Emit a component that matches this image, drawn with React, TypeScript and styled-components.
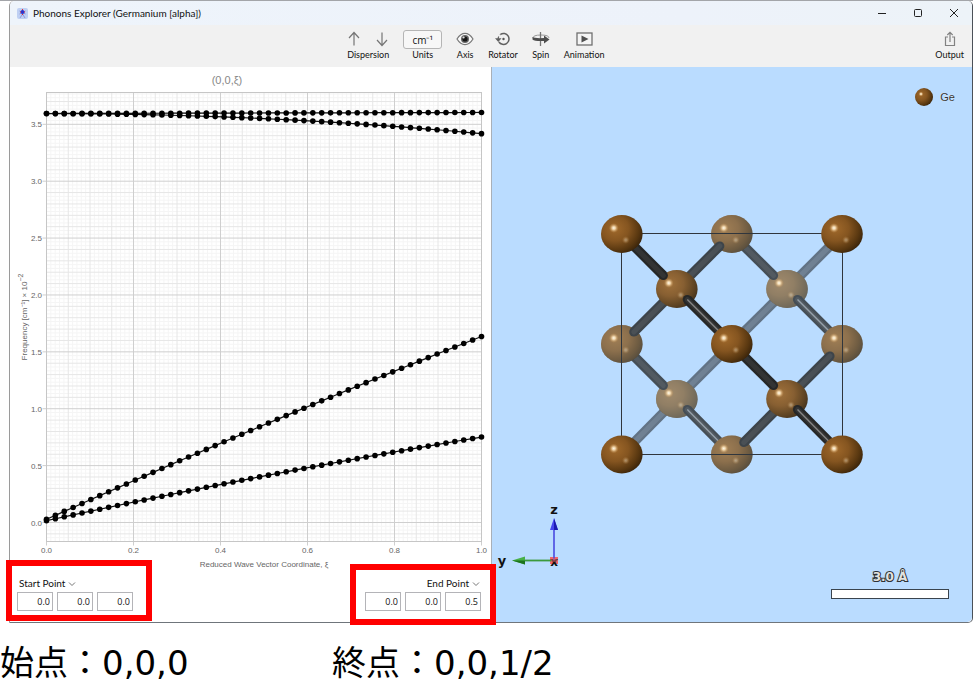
import React from "react";
import styled, { createGlobalStyle } from "styled-components";

const UI_FONT = `Lato, "Open Sans", sans-serif`;
const SKY = "#badcff";

const GlobalStyle = createGlobalStyle`
  * { box-sizing: border-box; }
  body { margin: 0; background: #fff; color: #111; font-family: ${UI_FONT}; }
  button, input { font: inherit; color: inherit; }
`;

const Page = styled.main`
  padding: 0 0 0 9px;
  border-top: 1px solid #a3a5a9;
`;

const Window = styled.section`
  border: solid #9a9a9a;
  border-width: 0 1px 1px 1px;
  border-right-color: #4b5158;
  border-bottom-color: #6f757b;
  border-radius: 5px 5px 5px 0;
`;

const TitleBar = styled.header`
  display: flex;
  align-items: center;
  height: 24px;
  padding-left: 7px;
  gap: 5px;
  background: linear-gradient(90deg, #eef4fb, #edf2fa 70%, #edf3f8);
  border-radius: 5px 5px 0 0;
`;

const Title = styled.h1`
  flex: 1;
  margin: 0;
  font-size: 10px;
  font-weight: 400;
  line-height: 22px;
`;

const Caption = styled.div`
  display: flex;
`;

const CaptionButton = styled.button`
  display: grid;
  place-items: center;
  width: 36px;
  height: 24px;
  padding: 0;
  border: 0;
  background: none;
`;

const Toolbar = styled.nav`
  display: flex;
  height: 42px;
  background: #f1f1f1;
`;

const Spacer = styled.div<{ $grow: number }>`
  flex: ${(p) => p.$grow} 1 0;
  display: flex;
  justify-content: flex-end;
  padding-right: 8px;
`;

const Tools = styled.div`
  display: flex;
  gap: 14px;
`;

const Tool = styled.div`
  display: flex;
  flex-direction: column;
  align-items: center;
  padding-top: 4px;
  font-size: 9px;
  line-height: 12px;
`;

const ToolButton = styled.button`
  display: flex;
  flex-direction: column;
  align-items: center;
  padding: 4px 0 0;
  border: 0;
  background: none;
  font-size: 9px;
  line-height: 12px;
`;

const IconSlot = styled.span`
  display: flex;
  align-items: center;
  justify-content: center;
  height: 20px;
`;

const ArrowPair = styled.div`
  display: flex;
  gap: 14px;
  height: 20px;
`;

const BareButton = styled.button`
  display: grid;
  place-items: center;
  width: 14px;
  padding: 0;
  border: 0;
  background: none;
`;

const UnitsFace = styled.span`
  display: block;
  width: 39px;
  height: 19px;
  border: 1px solid #b5b5b5;
  border-radius: 3px;
  background: #f7f7f7;
  font: 10px/18px "Open Sans", sans-serif;
`;

const Content = styled.div`
  display: grid;
  grid-template-columns: 482fr 480fr;
`;

const ChartPanel = styled.section`
  display: flex;
  flex-direction: column;
  min-width: 0;
  border-right: 1px solid #a9b0b8;
  background: #fff;
`;

const Drawing = styled.svg`
  display: block;
  width: 100%;
  height: auto;
`;

const Points = styled.div`
  display: flex;
  justify-content: space-between;
  align-items: flex-start;
  margin: -12px -5px -3px -4px;
  position: relative;
`;

const PointBox = styled.fieldset<{ $end?: boolean }>`
  display: flex;
  flex-direction: column;
  align-items: ${(p) => (p.$end ? "flex-end" : "flex-start")};
  width: 146px;
  height: 61px;
  margin: ${(p) => (p.$end ? "4px 0 0" : "0")};
  padding: ${(p) => (p.$end ? "7px 9px 0 5px" : "11px 5px 0")};
  border: 6px solid #f00;
`;

const PointMenu = styled.button`
  display: flex;
  align-items: center;
  gap: 3px;
  padding: 0 1px 0 2px;
  border: 0;
  background: none;
  font-size: 10px;
  line-height: 13px;
`;

const Coordinates = styled.div`
  display: flex;
  gap: 4px;
  margin-top: 2px;
`;

const Coordinate = styled.input`
  width: 36px;
  height: 19px;
  padding: 0 2px;
  border: 1px solid #b4b4b8;
  background: #fff;
  font: 9px "Open Sans", sans-serif;
  text-align: right;
`;

const Viewer = styled.section`
  display: flex;
  flex-direction: column;
  min-width: 0;
  background: ${SKY};
  border-radius: 0 0 5px 0;
`;

const Legend = styled.div`
  display: flex;
  align-items: center;
  justify-content: flex-end;
  gap: 6px;
  height: 60px;
  padding-right: 17px;
  font: 11px "Liberation Sans", Arial, sans-serif;
  color: #333;
  text-shadow: 0 0 1px #fff;
`;

const CrystalArea = styled.div`
  padding-top: 73px;
`;

const ViewerFooter = styled.footer`
  display: flex;
  flex: 1;
  justify-content: space-between;
  align-items: flex-end;
  padding: 0 23px 23px 4px;
`;

const TriadSlot = styled.div`
  display: flex;
  padding-bottom: 29px;
`;

const Scale = styled.div`
  display: flex;
  flex-direction: column;
  align-items: center;
  width: 118px;
`;

const ScaleLabel = styled.span`
  font: bold 12px/14px "DejaVu Sans", sans-serif;
  color: #e2e2de;
  -webkit-text-stroke: 2px #2c3136;
  paint-order: stroke fill;
  margin-bottom: 5px;
`;

const ScaleBar = styled.div`
  width: 100%;
  height: 10px;
  border: 1px solid #3a444e;
  background: #fff;
`;

const Notes = styled.div`
  display: flex;
  margin: 16px 0 0 -9px;
  font: 34px/49px "DejaVu Sans", "Noto Sans CJK JP", sans-serif;
  color: #000;
`;

const Note = styled.p<{ $wide?: boolean }>`
  margin: 0;
  flex: ${(p) => (p.$wide ? "641 1 0" : "332 1 0")};
  white-space: nowrap;
`;

/* ---------- chart ---------- */

const X0 = 46.5;
const X1 = 481.5;
const TOP = 92.5;
const BOTTOM = 541.5;
const ZERO = 522.5;
const UNIT = 113.77;
const px = (t: number) => X0 + (X1 - X0) * t;
const py = (v: number) => ZERO - UNIT * v;

const branches: ((t: number) => number)[] = [
  (t) => 3.595 + 0.009 * t,
  (t) => 3.594 - 0.176 * t * t,
  (t) => 0.028 + 1.712 * t - 0.105 * t * t,
  (t) => 0.016 + 0.835 * t - 0.1 * t * t,
];
const samples = Array.from({ length: 50 }, (_, i) => i / 49);

function DispersionChart() {
  const xs = Array.from({ length: 101 }, (_, i) => i).filter((i) => i % 20);
  const ys = Array.from({ length: 120 }, (_, i) => i - 4).filter(
    (i) => py(i / 30) > TOP && i % 15
  );
  return (
    <Drawing viewBox="10 67 481 505" role="img" aria-label="Phonon dispersion">
      <g stroke="#f5f5f5">
        {xs.filter((i) => i % 5).map((i) => (
          <line key={i} x1={px(i / 100)} x2={px(i / 100)} y1={TOP} y2={BOTTOM} />
        ))}
        {ys.filter((i) => i % 3).map((i) => (
          <line key={i} x1={X0} x2={X1} y1={py(i / 30)} y2={py(i / 30)} />
        ))}
      </g>
      <g stroke="#e6e6e6">
        {xs.filter((i) => i % 5 === 0).map((i) => (
          <line key={i} x1={px(i / 100)} x2={px(i / 100)} y1={TOP} y2={BOTTOM} />
        ))}
        {ys.filter((i) => i % 3 === 0).map((i) => (
          <line key={i} x1={X0} x2={X1} y1={py(i / 30)} y2={py(i / 30)} />
        ))}
      </g>
      <g stroke="#cfcfcf">
        {[0, 0.2, 0.4, 0.6, 0.8, 1].map((t) => (
          <line key={t} x1={px(t)} x2={px(t)} y1={TOP} y2={BOTTOM + 4} />
        ))}
        {[0, 0.5, 1, 1.5, 2, 2.5, 3, 3.5].map((v) => (
          <line key={v} x1={X0 - 4} x2={X1} y1={py(v)} y2={py(v)} />
        ))}
      </g>
      <rect x={X0} y={TOP} width={X1 - X0} height={BOTTOM - TOP} fill="none" stroke="#c6c6c6" />
      {branches.map((f, b) => (
        <g key={b}>
          <polyline
            points={samples.map((t) => `${px(t)},${py(f(t))}`).join(" ")}
            fill="none"
            stroke="#111"
            strokeWidth="1.2"
          />
          {samples.map((t) => (
            <circle key={t} cx={px(t)} cy={py(f(t))} r="2.8" />
          ))}
        </g>
      ))}
      <g fontFamily="Liberation Sans, Arial, sans-serif" fontSize="8" fill="#666">
        {[0, 0.5, 1, 1.5, 2, 2.5, 3, 3.5].map((v) => (
          <text key={v} x="42" y={py(v) + 3} textAnchor="end">{v.toFixed(1)}</text>
        ))}
        {[0, 0.2, 0.4, 0.6, 0.8, 1].map((t) => (
          <text key={t} x={px(t)} y="553" textAnchor="middle">{t.toFixed(1)}</text>
        ))}
        <text x="264" y="567" textAnchor="middle">Reduced Wave Vector Coordinate, ξ</text>
        <text transform="translate(27 317) rotate(-90)" textAnchor="middle">
          Frequency [cm⁻¹] × 10<tspan dy="-4" fontSize="7">−2</tspan>
        </text>
        <text x="227" y="84" textAnchor="middle" fontSize="11" fill="#888">(0,0,ξ)</text>
      </g>
    </Drawing>
  );
}

/* ---------- crystal ---------- */

const GX = [621.8, 676.8, 731.8, 787, 842];
const GY = [234, 289, 344, 399, 454.5];
type Site = [number, number];
type Level = { fog: number; atoms: Site[] };

const levels: Level[] = [
  { fog: 0, atoms: [[0, 0], [4, 0], [2, 2], [0, 4], [4, 4]] },
  { fog: 0.12, atoms: [[1, 1], [3, 3]] },
  { fog: 0.3, atoms: [[2, 0], [0, 2], [4, 2], [2, 4]] },
  { fog: 0.46, atoms: [[3, 1], [1, 3]] },
  { fog: 0.5, atoms: [[0, 0], [4, 0], [2, 2], [0, 4], [4, 4]] },
];
const bondColors = [
  { edge: "#262727", core: "#333434", shine: "#858585" },
  { edge: "#3d444a", core: "#4a5055", shine: "#50565b" },
  { edge: "#454e56", core: "#525a61", shine: "#96a1ab" },
  { edge: "#627385", core: "#708193", shine: "#76879a" },
];

function Atom({ site: [i, j], fog }: { site: Site; fog: number }) {
  const x = GX[i];
  const y = GY[j];
  return (
    <g>
      <ellipse cx={x} cy={y} rx="20.8" ry="18.9" fill="url(#ge)" />
      <ellipse cx={x} cy={y} rx="20.8" ry="18.9" fill="#a0b0b6" opacity={fog} />
      <circle cx={x - 8} cy={y - 6} r="5" fill="url(#glint)" />
      <circle cx={x + 4} cy={y + 6} r="4" fill="url(#glint)" opacity="0.4" />
    </g>
  );
}

/* Bonds joining a nearer level to the one behind it, stopping at the farther atom's face. */
function Bonds({ near }: { near: number }) {
  const c = bondColors[near];
  const parts: React.ReactNode[] = [];
  levels[near].atoms.forEach(([i, j]) =>
    levels[near + 1].atoms.forEach(([k, l]) => {
      if (Math.abs(i - k) !== 1 || Math.abs(j - l) !== 1) return;
      const sx = Math.sign(k - i);
      const sy = Math.sign(l - j);
      const shiny = near % 2 === 0 && sx < 0 && sy < 0;
      const inset = shiny ? 10.5 : sx === sy ? 13.5 : 12;
      const line = {
        x1: GX[i] + sx * 8,
        y1: GY[j] + sy * 8,
        x2: GX[k] - sx * inset,
        y2: GY[l] - sy * inset,
      };
      parts.push(
        <g key={`${i}${j}${k}${l}`}>
          <line {...line} stroke={c.edge} strokeWidth="9.6" />
          <circle cx={line.x2} cy={line.y2} r="4.6" fill={c.edge} />
          <line {...line} stroke={c.core} strokeWidth="5" strokeLinecap="round" />
          {shiny && <line {...line} stroke={c.shine} strokeWidth="1.4" />}
        </g>
      );
    })
  );
  return <g>{parts}</g>;
}

function Crystal() {
  return (
    <Drawing viewBox="492 200 480 290" role="img" aria-label="Germanium unit cell">
      <defs>
        <radialGradient id="ge" cx="0.34" cy="0.36" r="0.72">
          <stop offset="0" stopColor="#a0692b" />
          <stop offset="0.45" stopColor="#855520" />
          <stop offset="0.8" stopColor="#583710" />
          <stop offset="1" stopColor="#38230a" />
        </radialGradient>
        <radialGradient id="glint">
          <stop offset="0" stopColor="#fffdf2" />
          <stop offset="0.35" stopColor="#ffe5ba" stopOpacity="0.8" />
          <stop offset="1" stopColor="#c08a48" stopOpacity="0" />
        </radialGradient>
      </defs>
      <Bonds near={3} />
      {levels[3].atoms.map((s) => <Atom key={s.join()} site={s} fog={levels[3].fog} />)}
      <Bonds near={2} />
      {levels[2].atoms.map((s) => <Atom key={s.join()} site={s} fog={levels[2].fog} />)}
      <Bonds near={1} />
      <rect x="621.5" y="233.5" width="221" height="221" fill="none" stroke="#30363d" />
      {levels[1].atoms.map((s) => <Atom key={s.join()} site={s} fog={levels[1].fog} />)}
      <Bonds near={0} />
      {levels[0].atoms.map((s) => <Atom key={s.join()} site={s} fog={levels[0].fog} />)}
    </Drawing>
  );
}

function AxisTriad() {
  return (
    <svg width="66" height="68" viewBox="496 502 66 68" role="img" aria-label="Axes x, y, z">
      <rect x="550" y="557" width="8" height="7" fill="#f0646a" />
      <line x1="554" x2="554" y1="528" y2="561" stroke="#4a4ae0" strokeWidth="1.6" />
      <path d="M554 518l-4 12h8z" fill="#4646ee" />
      <path d="M554 518v12h4z" fill="#1b1bb0" />
      <line x1="524" x2="553" y1="560.5" y2="560.5" stroke="#3c9a3c" strokeWidth="1.8" />
      <path d="M512 560.5l13-4v8z" fill="#48b048" />
      <path d="M512 560.5h13v4z" fill="#1d741d" />
      <g fontFamily="DejaVu Sans, sans-serif" fontWeight="bold" fontSize="13" fill="#111">
        <text x="554" y="514" textAnchor="middle">z</text>
        <text x="502" y="565" textAnchor="middle">y</text>
        <text x="554" y="566" textAnchor="middle" fontSize="12">x</text>
      </g>
      <rect x="551" y="558" width="6" height="4" fill="#f0646a" opacity="0.5" />
    </svg>
  );
}

/* ---------- icons ---------- */

const AppIcon = () => (
  <svg width="11" height="11" viewBox="0 0 11 11">
    <rect width="11" height="11" rx="2" fill="#bfd0f3" />
    <path d="M5.500 1v6M2.500 3l6 3M8.500 3l-6 3M3 10l2.500-4L8 10" stroke="#8d97dc" fill="none" />
    <circle cx="5.500" cy="4" r="2" fill="#2d35cc" />
    <path d="M5.500 1v1M3 4h1M7 4h1M5.500 6v1" stroke="#e02d3c" />
  </svg>
);

const Arrow = ({ down }: { down?: boolean }) => (
  <svg width="12" height="16" viewBox="0 0 12 16" fill="none" stroke="#757575" strokeWidth="1.200">
    {down ? <path d="M6 1.500v13M1 9l5 5.500L11 9" /> : <path d="M6 14.500v-13M1 7l5-5.500L11 7" />}
  </svg>
);

const EyeIcon = () => (
  <svg width="18" height="14" viewBox="0 0 18 14">
    <path d="M1 7Q4.500 1.300 9 1.300T17 7Q13.500 12.700 9 12.700T1 7z" fill="#f8f8f8" stroke="#777" strokeWidth="1.200" />
    <circle cx="9" cy="7" r="4" fill="#666" />
    <circle cx="9" cy="7" r="2.600" fill="#161616" />
    <circle cx="7.600" cy="5.500" r="1.100" fill="#ddd" />
  </svg>
);

const RotatorIcon = () => (
  <svg width="16" height="14" viewBox="0 0 16 14" fill="none" stroke="#606060" strokeWidth="1.500">
    <path d="M5.500 2.300A5.500 5.500 0 1 1 3.900 10" />
    <path d="M3.200 7.500A5.500 5.500 0 0 1 5.500 2.500" strokeWidth="1.200" strokeDasharray="3 2" />
    <path d="M0 6.300h6.500L3.300 10z" fill="#606060" stroke="none" />
    <circle cx="8.500" cy="7" r="1.200" fill="#555" stroke="none" />
  </svg>
);

const SpinIcon = () => (
  <svg width="18" height="16" viewBox="0 0 18 16">
    <path d="M1 7Q1 4 9 4t8 3" fill="none" stroke="#999" />
    <path d="M8.500 1v14" stroke="#777" strokeWidth="1.300" />
    <path d="M.500 6Q3 7.500 12 7V4.500L17.500 8.500 12 12.500V10Q3 10.500 .500 8.500z" fill="#4d4d4d" />
  </svg>
);

const PlayIcon = () => (
  <svg width="17" height="14" viewBox="0 0 17 14">
    <rect x="1" y="1" width="15" height="12" fill="#f5f5f5" stroke="#707070" strokeWidth="1.300" />
    <path d="M5.500 3.500l7 3.500-7 3.500z" fill="#505050" />
  </svg>
);

const OutputIcon = () => (
  <svg width="12" height="16" viewBox="0 0 12 16" fill="none" stroke="#828282" strokeWidth="1.200">
    <path d="M4 6H1.500v8.500h9V6H8M6 11V1.500M3.300 4L6 1.300 8.700 4" />
  </svg>
);

const Chevron = () => (
  <svg width="8" height="6" viewBox="0 0 8 6" fill="none" stroke="#777">
    <path d="M1 1.500l3 3 3-3" />
  </svg>
);

function PointEditor({ label, values, end }: { label: string; values: string[]; end?: boolean }) {
  return (
    <PointBox $end={end} aria-label={label}>
      <PointMenu type="button">{label}<Chevron /></PointMenu>
      <Coordinates>
        {values.map((v, i) => (
          <Coordinate key={i} defaultValue={v} aria-label={`${label} ${"xyz"[i]}`} />
        ))}
      </Coordinates>
    </PointBox>
  );
}

export default function App() {
  return (
    <Page>
      <GlobalStyle />
      <Window>
        <TitleBar>
          <AppIcon />
          <Title>Phonons Explorer (Germanium [alpha])</Title>
          <Caption>
            <CaptionButton aria-label="Minimize">
              <svg width="10" height="10" stroke="#222"><path d="M1 5.500h8" /></svg>
            </CaptionButton>
            <CaptionButton aria-label="Maximize">
              <svg width="10" height="10" fill="none" stroke="#222"><rect x="1.500" y="1.500" width="7" height="7" rx="1" /></svg>
            </CaptionButton>
            <CaptionButton aria-label="Close">
              <svg width="10" height="10" stroke="#222"><path d="M1 1l8 8M9 1L1 9" /></svg>
            </CaptionButton>
          </Caption>
        </TitleBar>
        <Toolbar>
          <Spacer $grow={336} />
          <Tools>
            <Tool>
              <ArrowPair>
                <BareButton aria-label="Previous dispersion"><Arrow /></BareButton>
                <BareButton aria-label="Next dispersion"><Arrow down /></BareButton>
              </ArrowPair>
              Dispersion
            </Tool>
            <ToolButton><IconSlot><UnitsFace>cm⁻¹</UnitsFace></IconSlot>Units</ToolButton>
            <ToolButton><IconSlot><EyeIcon /></IconSlot>Axis</ToolButton>
            <ToolButton><IconSlot><RotatorIcon /></IconSlot>Rotator</ToolButton>
            <ToolButton><IconSlot><SpinIcon /></IconSlot>Spin</ToolButton>
            <ToolButton><IconSlot><PlayIcon /></IconSlot>Animation</ToolButton>
          </Tools>
          <Spacer $grow={367}>
            <ToolButton><IconSlot><OutputIcon /></IconSlot>Output</ToolButton>
          </Spacer>
        </Toolbar>
        <Content>
          <ChartPanel>
            <DispersionChart />
            <Points>
              <PointEditor label="Start Point" values={["0.0", "0.0", "0.0"]} />
              <PointEditor label="End Point" values={["0.0", "0.0", "0.5"]} end />
            </Points>
          </ChartPanel>
          <Viewer>
            <Legend>
              <svg width="20" height="20" viewBox="0 0 20 20">
                <circle cx="10" cy="10" r="9" fill="url(#ge)" />
                <circle cx="7" cy="7" r="2.500" fill="url(#glint)" />
              </svg>
              Ge
            </Legend>
            <CrystalArea><Crystal /></CrystalArea>
            <ViewerFooter>
              <TriadSlot><AxisTriad /></TriadSlot>
              <Scale>
                <ScaleLabel>3.0 Å</ScaleLabel>
                <ScaleBar />
              </Scale>
            </ViewerFooter>
          </Viewer>
        </Content>
      </Window>
      <Notes>
        <Note>始点：0,0,0</Note>
        <Note $wide>終点：0,0,1/2</Note>
      </Notes>
    </Page>
  );
}
